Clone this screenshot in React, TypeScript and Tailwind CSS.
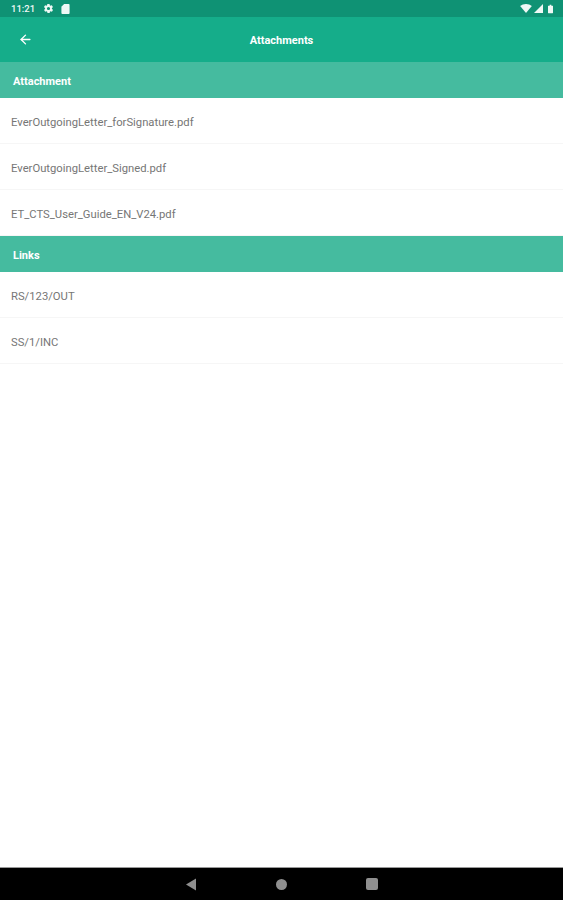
import { ArrowLeft } from 'lucide-react';

const font = 'font-["Roboto",sans-serif]';

function SectionHeader({ title }: { title: string }) {
  return (
    <div className="flex h-[36px] items-center bg-[#45bb9f] pl-[13px] pt-[5px] text-[11px] font-bold text-white">
      {title}
    </div>
  );
}

function Row({ label }: { label: string }) {
  return (
    <div className="flex h-[46px] items-center border-b border-[#f6f6f6] pl-[11px] pt-[6px] text-[11.25px] text-[#767676]">
      {label}
    </div>
  );
}

function StatusBar() {
  return (
    <div className="flex h-[17px] items-center justify-between bg-[#0f9274] pl-[11px] pr-[10px] text-[#eef8f5]">
      <div className="flex items-center">
        <span className="w-[32px] pt-[1px] text-[9.5px] font-medium">11:21</span>
        <svg width="11" height="11" viewBox="0 0 24 24" fill="currentColor">
          <path
            fillRule="evenodd"
            d="M19.4 13c.1-.3.1-.7.1-1s0-.7-.1-1l2.1-1.6c.2-.2.2-.4.1-.6l-2-3.5c-.1-.2-.4-.3-.6-.2l-2.5 1c-.5-.4-1.1-.7-1.7-1l-.4-2.6c0-.3-.2-.5-.5-.5h-4c-.3 0-.5.2-.5.4l-.4 2.7c-.6.2-1.2.6-1.7 1l-2.5-1c-.2-.1-.5 0-.6.2l-2 3.5c-.1.2-.1.5.1.6L4.6 11c-.1.3-.1.7-.1 1s0 .7.1 1l-2.1 1.6c-.2.2-.2.4-.1.6l2 3.5c.1.2.4.3.6.2l2.5-1c.5.4 1.1.7 1.7 1l.4 2.6c0 .3.2.5.5.5h4c.3 0 .5-.2.5-.4l.4-2.7c.6-.2 1.2-.6 1.7-1l2.5 1c.2.1.5 0 .6-.2l2-3.5c.1-.2.1-.5-.1-.6L19.4 13zM12 15.5a3.500 3.500 0 1 1 0-7 3.500 3.500 0 0 1 0 7z"
          />
        </svg>
        <svg width="9" height="10" viewBox="0 0 9 11" fill="currentColor" className="ml-[7px]">
          <path d="M3 0h5a1 1 0 0 1 1 1v9a1 1 0 0 1-1 1H1a1 1 0 0 1-1-1V3z" />
        </svg>
      </div>
      <div className="flex items-center gap-[2px]">
        <svg width="12" height="9" viewBox="0 0 13 10" fill="currentColor">
          <path d="M0 2.200C1.800.8 4 0 6.500 0S11.200.8 13 2.200L6.500 10z" />
        </svg>
        <svg width="9" height="9" viewBox="0 0 9 9" fill="currentColor">
          <path d="M9 0v9H0z" />
        </svg>
        <svg width="5" height="10" viewBox="0 0 6 10" fill="currentColor" className="ml-[3px]">
          <path d="M2 0h2v1h1.500a.5.500 0 0 1 .5.500V9.500a.5.500 0 0 1-.5.500H.5a.5.500 0 0 1-.5-.5V1.500A.5.500 0 0 1 .5 1H2z" />
        </svg>
      </div>
    </div>
  );
}

function NavBar() {
  return (
    <div className="flex h-[33px] items-center justify-center gap-[79px] border-t border-[#999999] bg-black pr-[1px]">
      <svg width="12" height="13" viewBox="0 0 12 13" fill="#8f8f8f">
        <path d="M11 0.500v12L1 6.500z" />
      </svg>
      <div className="h-[11px] w-[11px] rounded-full bg-[#8f8f8f]" />
      <div className="h-[12px] w-[12px] rounded-[2px] bg-[#8f8f8f]" />
    </div>
  );
}

export default function App() {
  return (
    <div className={`flex h-[900px] w-[563px] flex-col bg-white ${font}`}>
      <StatusBar />
      <div className="relative flex h-[45px] items-center justify-center bg-[#15ad8a] pt-[3px] text-[11px] font-bold text-white">
        <ArrowLeft size={15} strokeWidth={2.2} className="absolute left-[18px] top-[15px]" />
        Attachments
      </div>
      <SectionHeader title="Attachment" />
      <Row label="EverOutgoingLetter_forSignature.pdf" />
      <Row label="EverOutgoingLetter_Signed.pdf" />
      <Row label="ET_CTS_User_Guide_EN_V24.pdf" />
      <SectionHeader title="Links" />
      <Row label="RS/123/OUT" />
      <Row label="SS/1/INC" />
      <div className="flex-1" />
      <NavBar />
    </div>
  );
}
